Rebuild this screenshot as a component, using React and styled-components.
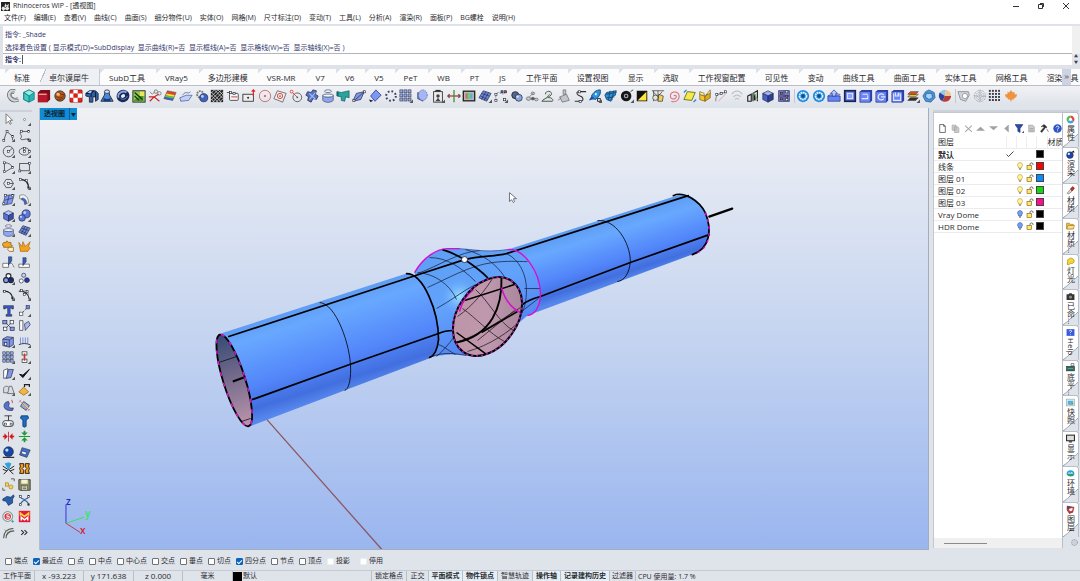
import React from "react";

import styled, { createGlobalStyle, css } from "styled-components";

const GlobalStyle = createGlobalStyle`
    * {
        box-sizing: border-box;
    }
    body {
        margin: 0;
        overflow: hidden;
        background: #dfe3ea;
        color: #2a2a2e;
        font-family: "Open Sans", "Noto Sans CJK SC", sans-serif;
        font-size: 8px;
        line-height: 12px;
    }
    button,
    input {
        font: inherit;
        color: inherit;
    }
    button {
        padding: 0;
        border: 0;
        background: none;
        white-space: nowrap;
    }
`;

/* ---------- icons, all on a 16 x 16 grid ---------- */

const K = "#20263a";
const B = "#3f5fd0";

const corner = <path d="M16 12v4h-4z" fill="#555" />;

const node = (x, y, color = "#fff") => (
    <rect x={x - 1} y={y - 1} width="2.4" height="2.4" fill={color} stroke={K} strokeWidth=".7" />
);

const ball = (fill, shine, x = 8, y = 8, r = 6) => (
    <g>
        <circle cx={x} cy={y} r={r} fill={fill} stroke={K} strokeWidth=".8" />
        <circle cx={x - r / 3} cy={y - r / 3} r={r / 3} fill={shine} />
    </g>
);

const cube = (a, b, c) => (
    <g stroke={K} strokeWidth=".7">
        <path d="M2 5l6-3 6 3-6 3z" fill={a} />
        <path d="M2 5l6 3v7l-6-3z" fill={b} />
        <path d="M14 5v7l-6 3V8z" fill={c} />
    </g>
);

const blueTile = (inner) => (
    <g>
        <path d="M1 3l2-2h12v12l-2 2H1z" fill="#2a3fa8" />
        <path d="M1 3h12v12H1z" fill="#6c86f4" stroke="#26388f" strokeWidth=".7" />
        {inner}
    </g>
);

const squares = (n, size, fill) => {
    const list = [];
    for (let i = 0; i < n * n; i++) {
        const step = 14 / n;
        list.push(
            <rect
                key={i}
                x={1 + (i % n) * step}
                y={1 + Math.floor(i / n) * step}
                width={size}
                height={size}
                fill={fill}
                stroke={n === 3 ? K : "none"}
                strokeWidth=".6"
            />
        );
    }
    return list;
};

const icons = {
    pipe: (
        <g fill="none">
            <path d="M10 3C5 1 2 6 5 10c2 3 6 3 9 2" stroke="#555" strokeWidth="5" />
            <path d="M10 3C5 1 2 6 5 10c2 3 6 3 9 2" stroke="#d2d5da" strokeWidth="3.600" />
            <path d="M9 3C5 3 4 7 6 9c2 3 5 3 8 3" stroke="#888" />
        </g>
    ),
    gem: (
        <g stroke="#0a5f66" strokeWidth=".7">
            <path d="M8 1l6 3v8l-6 3-6-3V4z" fill="#26b7b4" />
            <path d="M8 1l6 3-6 4-6-4z" fill="#8ff0e4" />
            <path d="M2 4l6 4v7l-6-3z" fill="#3fcdc6" />
        </g>
    ),
    redbox: (
        <g>
            <path d="M1 4l3-3h11v11l-3 3H1z" fill="#7c0d1b" />
            <path d="M1 5h11v10H1z" fill="#b8182c" />
            <path d="M2 6h9" stroke="#ffb5b5" strokeWidth="1.300" />
        </g>
    ),
    wood: (
        <g>
            {ball("#b4581c", "#f5b56b")}
            <path d="M3 8c3 3 7 3 10-1M4 12c3 1 6 0 8-2M6 3c2 3 5 4 7 3" stroke="#6d300c" fill="none" />
        </g>
    ),
    checker: (
        <g>
            <rect x="1" y="1" width="14" height="14" rx="1" fill="#e4281c" stroke="#650f0b" strokeWidth=".7" />
            <path d="M1 5h4V1h5v4h5v5h-5v5H5v-5H1z" fill="#fff" />
            <rect x="5" y="5" width="5" height="5" fill="#d2231a" />
        </g>
    ),
    football: (
        <g>
            <path d="M1 5l4-3h7l3 3v7l-3 2V9H9v6H5V9l-4-1z" fill="#2e63a9" stroke={K} />
            <path d="M1 5h6l3-3M7 5v4M12 3v6" stroke="#0f1b38" strokeWidth="1.300" fill="none" />
            <path d="M3 4l3-2 2 1-2 2z" fill="#9cd2ff" />
        </g>
    ),
    robe: (
        <g>
            <path d="M6 2h4l1 5 4 7H1l4-7z" fill="#4a89d8" stroke={K} />
            <ellipse cx="8" cy="3" rx="3" ry="2" fill="#cde1fa" stroke={K} strokeWidth=".8" />
            <path d="M4 10c3 2 6 2 8 0v4H4z" fill="#173a79" />
        </g>
    ),
    torus: (
        <g fill="none">
            <ellipse cx="8" cy="8" rx="5" ry="4.500" stroke="#142a5c" strokeWidth="5" transform="rotate(-30 8 8)" />
            <path d="M3 10C1 5 8 1 12 4" stroke="#8da4dd" strokeWidth="2" />
            <path d="M5 10c1 3 7 2 8-2" stroke="#7b86a8" />
        </g>
    ),
    terrain: (
        <g>
            <rect x="1" y="2" width="14" height="13" fill="#8fc94b" stroke={K} />
            <path d="M2 13L13 5v9H2z" fill="#4c9a2d" />
            <path d="M3 4l9 8M3 8l5 5" stroke="#17310f" strokeWidth="1.400" />
            <rect x="9" y="3" width="5" height="5" fill="#ece45a" />
        </g>
    ),
    scissors: (
        <g fill="none">
            <circle cx="9" cy="3" r="2" stroke="#777" />
            <circle cx="13" cy="5" r="2" stroke="#777" />
            <path d="M1 9h6l5-3M7 9l6 5M7 9l-5 5" stroke="#c22" strokeWidth="1.300" />
            <path d="M2 3l3 3 3-3" stroke="#777" />
        </g>
    ),
    rainbow: (
        <g>
            <path d="M5 2l10 2-4 9L1 11z" fill="#e0432e" />
            <path d="M4 5l10 2-1 2L3 7z" fill="#f5e13c" />
            <path d="M3 7l10 2-1 2L2 9z" fill="#3ecf52" />
            <path d="M2 9l10 2-1 2L1 11z" fill="#3b5bea" />
            <path d="M5 2l10 2-4 9L1 11z" fill="none" stroke="#555" strokeWidth=".6" />
        </g>
    ),
    surf: (
        <g stroke="#5566a0" strokeWidth=".9">
            <path d="M1 10l5-2c3-2 6 0 9-1l-4 6-9 1z" fill="#c2cff7" />
            <path d="M4 7c4-6 7 0 9-4" fill="none" />
        </g>
    ),
    gearball: (
        <g>
            <circle cx="6" cy="6" r="3.600" fill="none" stroke="#777" strokeWidth="2.200" strokeDasharray="2 1" />
            {ball("#4061c4", "#bcd0ff", 10, 10, 4.6)}
        </g>
    ),
    mesh: (
        <g>
            <rect x="1" y="1" width="14" height="14" fill="#222" />
            <path d="M1 3l12 12M1 7l8 8M1 11l4 4M5 1l10 10M9 1l6 6M1 5l4-4M1 9l8-8M1 13L13 1M3 15L15 3M7 15l8-8M11 15l4-4" stroke="#d3d3d3" strokeWidth=".9" />
        </g>
    ),
    rectcurve: (
        <g fill="none" stroke="#444">
            <rect x="4" y="5" width="10" height="8" rx="1" fill="#f5f5f5" />
            <path d="M1 4h5" stroke="#444" />
            <path d="M6 9h7" stroke="#b33" />
            {node(5, 4)}
            {node(9, 5)}
        </g>
    ),
    rectarrow: (
        <g fill="none">
            <rect x="1" y="6" width="12" height="8" fill="#eee" stroke="#333" />
            <circle cx="7" cy="10" r="1.200" fill="#333" />
            <path d="M13 8V1M11 3l2-2 2 2" stroke="#d22" strokeWidth="1.300" />
        </g>
    ),
    redcircle: (
        <g fill="none" stroke="#c66">
            <circle cx="8" cy="8" r="6.500" />
            <circle cx="8" cy="8" r=".8" fill="#e33" />
        </g>
    ),
    diamondcircle: (
        <g fill="none">
            <path d="M5 2l10 3-4 10-10-4z" stroke="#666" fill="#eee" />
            <circle cx="8" cy="8" r="3" stroke="#d33" />
            <circle cx="8" cy="8" r="1" fill="#d33" />
        </g>
    ),
    circledot: (
        <g fill="none">
            <circle cx="9.500" cy="9.500" r="5" stroke="#555" />
            <path d="M3 3l6 6" stroke="#d33" />
            <circle cx="3" cy="3" r="1.600" fill="#fff" stroke="#d33" />
            <circle cx="9.500" cy="9.500" r="1" fill="#555" />
        </g>
    ),
    clover: (
        <g fill="#5a72c4" stroke={K} strokeWidth=".8">
            <path d="M9 1l4 1-1 4 3 2-2 4-4-1-2 4-4-2 1-4-3-2 2-4 4 1z" />
            <path d="M5 5l7 7M12 4l-7 8" stroke="#a7bcff" strokeWidth="1.300" />
        </g>
    ),
    drum: (
        <g stroke="#4d5a80" strokeWidth=".9">
            <ellipse cx="8" cy="2.500" rx="4" ry="1.500" fill="#fff" />
            <path d="M2 7v6c3 3 9 3 12 0V7c-3 3-9 3-12 0z" fill="#8fa7ee" />
            <ellipse cx="8" cy="7.500" rx="6" ry="1.800" fill="#f4f6fd" />
        </g>
    ),
    tee: (
        <g>
            <path d="M1 3l5 1 9-2v8l-4-1-1 5-4-1V9L1 8z" fill="#2aa39e" stroke="#0c5555" strokeWidth=".7" />
            <path d="M2 3v5" stroke="#12686a" strokeWidth="2" />
        </g>
    ),
    sheet: (
        <g stroke={K} strokeWidth=".8">
            <path d="M5 5l9-2-4 9-9 2z" fill="#7f98ee" />
            <path d="M4 12L14 3" fill="none" />
            {node(14, 3)}
            {node(2, 13)}
        </g>
    ),
    bluediamond: (
        <g>
            <path d="M9 1l6 6-7 7-5-6z" fill="#7d97f4" stroke="#34488f" />
            <path d="M1 12l5 1-3 2z" fill={K} />
        </g>
    ),
    dotring: <circle cx="8" cy="8" r="5.500" fill="none" stroke="#33405f" strokeWidth="2.200" strokeDasharray="2 2.300" />,
    array: squares(3, 3.4, "#94a9e8"),
    bluecyl: (
        <g>
            <path d="M3 4v7l6 3V6z" fill="#6079d8" stroke={K} strokeWidth=".6" />
            <ellipse cx="9" cy="7" rx="5" ry="6" fill="#a4b6f4" stroke="#5d6fae" strokeDasharray="1.500 1" />
        </g>
    ),
    bottle: (
        <g>
            <rect x="3" y="3" width="10" height="12" fill="#ececec" stroke="#333" />
            <path d="M5 2h6" stroke="#333" strokeWidth="2" />
            <path d="M8 6a2 2 0 0 1 0 4l3 4H5l3-4a2 2 0 0 1 0-4" fill="#444" />
        </g>
    ),
    move: (
        <g strokeWidth="1.500">
            <path d="M1 8h14" stroke="#d22" />
            <path d="M8 1v14" stroke="#2b9a3b" />
            <path d="M3 6L1 8l2 2M13 6l2 2-2 2" stroke="#555" fill="none" />
        </g>
    ),
    picture: (
        <g>
            <rect x="1.500" y="2.500" width="13" height="11" fill="#b5b8be" stroke="#222" strokeWidth="1.500" />
            <path d="M4 5h4v6H4z" fill="#e8575e" />
            <path d="M6 5h4v6H6z" fill="#58d66b" />
            <path d="M10 5h2v6h-2z" fill="#6ba0f0" />
        </g>
    ),
    tilegrid: (
        <g stroke={K} strokeWidth=".7">
            <path d="M6 2l9 3-5 9-9-4z" fill="#6c86de" />
            <path d="M4 5l9 3M3 8l8 4M9 3L4 12M12 4l-5 9" fill="none" />
        </g>
    ),
    points: (
        <g fill="none">
            <path d="M2 13V6c5-6 6 4 12-3" stroke="#888" strokeDasharray="2 1" />
            {node(2, 13)}
            {node(2, 6)}
            {node(12, 12)}
            {node(13, 3, "#e33")}
            {node(9, 3, "#46e")}
        </g>
    ),
    pill: (
        <g>
            <ellipse cx="6" cy="7" rx="4" ry="4" fill="#56658e" stroke={K} />
            {ball("#8ba4dc", "#dbe6ff", 10, 10, 4)}
        </g>
    ),
    pebbles: (
        <g fill="#c4c9cf" stroke="#666" strokeWidth=".8">
            <ellipse cx="9" cy="5" rx="2" ry="1.500" />
            <ellipse cx="4" cy="11" rx="2.500" ry="2" />
            <ellipse cx="9" cy="11" rx="2" ry="1.500" fill="#555" />
            <ellipse cx="13" cy="12" rx="2" ry="1.500" />
            <path d="M5 9l4-4" />
        </g>
    ),
    snail: (
        <g fill="none" stroke="#444">
            <path d="M5 6c0-5 8-4 7 0-1 3-8 4-11 8h12c2-2-2-5-5-4" fill="#dfe3e4" />
            <path d="M4 12l6-6" stroke="#4d8c56" />
        </g>
    ),
    spray: (
        <g fill="#c2c6cc" stroke="#666" strokeWidth=".8">
            <path d="M7 1h3v5H7zM3 9l8-3 3 7-8 2z" />
            <path d="M1 13l4-3" />
        </g>
    ),
    spath: (
        <g fill="none" stroke="#333" strokeWidth="1.200">
            <path d="M15 3H7C3 3 4 7 8 8c4 1 5 6 0 6H2" />
            {node(7, 3)}
            {node(8, 14)}
        </g>
    ),
    rocket: (
        <g>
            <path d="M14 1c1 5-2 9-6 11L4 8c2-4 5-7 10-7z" fill="#2e93dd" stroke="#123e77" />
            <path d="M4 8l-3 5 4-1 3 0z" fill="#174b9b" />
            <circle cx="9" cy="6" r="1.300" fill="#c9f1ff" />
            <rect x="11" y="11" width="3" height="3" fill="#fff" stroke="#111" />
        </g>
    ),
    net: (
        <g>
            <path d="M3 4l11-2-1 5-4 2-1 5-5-2-2-5z" fill="#2f91cf" stroke="#10497c" />
            <path d="M2 6l12-2M3 10l9-1M7 2L5 13M11 2L9 13" stroke="#10497c" />
        </g>
    ),
    bomb: (
        <g>
            <circle cx="7" cy="8" r="6" fill="#15171b" />
            <circle cx="7" cy="8" r="2" fill="none" stroke="#aaa" strokeWidth="1.400" />
            <path d="M12 3l3-2" stroke="#333" />
        </g>
    ),
    contrast: (
        <g>
            <rect x="2" y="2" width="12" height="12" fill="#111" />
            <path d="M3 13L13 3v10z" fill="#ffe83b" />
        </g>
    ),
    bag: (
        <g>
            <path d="M1 2h14M2 3l11 10M13 3L3 13M3 2v12M8 2v12" stroke="#555" />
            <path d="M9 6l5 2-1 6H8z" fill="#f1ce54" stroke={K} strokeWidth=".7" />
            <circle cx="5" cy="10" r="3" fill="#e4e4d8" stroke="#555" />
        </g>
    ),
    spiral: (
        <path d="M8 8c1-2 4 0 2 2-2 3-7 1-6-3 1-5 9-5 10 1 0 5-5 8-9 6" fill="none" stroke="#df6b77" strokeWidth="1.200" />
    ),
    yellowtile: (
        <g>
            <path d="M5 3l9 1-4 9-9-1z" fill="#f5ea4b" stroke="#68671d" />
            <path d="M1 4l3-3M12 15l3-3" stroke="#2b86c9" strokeWidth="1.500" />
        </g>
    ),
    yellowbox: (
        <g stroke="#5f4d0b" strokeWidth=".7">
            <path d="M2 6l6 2v6l-6-2z" fill="#f8c52c" />
            <path d="M8 8l6-4v6l-6 4z" fill="#e3a71a" />
            <path d="M2 3l5 2 0 3-5-2zM14 1v4l-5 2z" fill="#fff4a6" />
        </g>
    ),
    curvepts: (
        <g fill="none" stroke="#777">
            <path d="M2 14c0-8 2-8 11-10" />
            <path d="M5 14L14 5" stroke="#d9a0a0" />
            {node(3, 6)}
            {node(8, 5)}
            {node(13, 3)}
        </g>
    ),
    waves: (
        <path d="M2 6c3-5 9-5 12 0M4 9c2-3 6-3 8 0M6 12c1-2 3-2 4 0" fill="none" stroke="#b8bdc4" strokeWidth="1.200" />
    ),
    penguin: (
        <g fill="none" stroke="#222" strokeWidth="1.300">
            <path d="M2 8l4-2v8H2zM8 14V5l5-3v12" />
            <path d="M10 6v7" stroke="#222" strokeWidth="2" />
            <path d="M9 4l4 8" stroke="#68c06e" />
        </g>
    ),
    bluecube: cube("#9db1f8", "#4661c9", "#2d3f99"),
    cubedots: (
        <g>
            <rect x="2" y="2" width="12" height="12" fill="#8090d6" stroke="#2b3776" />
            <path d="M8 2v12M2 8h12" stroke="#2b3776" />
            {node(5, 5, "#e44")}
            {node(5, 11, "#e44")}
            {node(11, 8, "#e44")}
            {node(11, 3)}
            {node(11, 12)}
        </g>
    ),
    ring: (
        <g>
            <circle cx="8" cy="8" r="7" fill="#1f8be0" />
            <circle cx="8" cy="8" r="4" fill="none" stroke="#e8f6ff" strokeWidth="2" strokeDasharray="2 .6" />
            <circle cx="8" cy="8" r="2" fill="#154a80" />
        </g>
    ),
    boxup: (
        <g>
            <path d="M1 8l3-2h11l-2 2z" fill="#b5c5ff" stroke="#26388f" strokeWidth=".6" />
            <path d="M1 8h14v6H1z" fill="#6883f3" stroke="#26388f" strokeWidth=".8" />
            <path d="M6 8V5H4l4-4 4 4h-2v3z" fill="#b5c5ff" stroke="#253a98" strokeWidth=".8" />
        </g>
    ),
    frame: (
        <g>
            <rect x="1" y="1" width="14" height="14" fill="#1a2452" />
            <rect x="3" y="3" width="10" height="10" fill="#6c86f4" />
            <rect x="5" y="5" width="6" height="6" fill="#8fa2f8" stroke="#e4eaff" />
        </g>
    ),
    tilerect: blueTile(<path d="M3 11h7V7M4 6h6" stroke="#e4eaff" fill="none" strokeWidth="1.200" />),
    tiletarget: blueTile(<path d="M10 7a3.500 3.500 0 1 0 0 4M7 9h5" stroke="#e4eaff" fill="none" strokeWidth="1.300" />),
    tilesave: blueTile(<path d="M3 5v8h8V5M5 4v4h4V4M8 5v2" stroke="#e4eaff" fill="none" strokeWidth="1.200" />),
    layers: (
        <g stroke={K} strokeWidth=".6">
            <path d="M2 13l3-3h9l-3 3z" fill="#333" />
            <path d="M2 9l3-3h9l-3 3z" fill="#f3c422" />
            <path d="M2 6l3-3h9l-3 3z" fill="#e2552c" />
        </g>
    ),
    poly: (
        <g stroke="#1d4f87" strokeWidth=".7">
            <path d="M8 1l6 3 1 6-5 5-6-1-3-6 3-5z" fill="#4c93d8" />
            <path d="M5 5l6 0 1 5-4 2-4-3z" fill="#a6d5fb" />
        </g>
    ),
    pie: (
        <g>
            <circle cx="8" cy="8" r="7" fill="#eef3f7" />
            <path d="M8 8L2 4a7 7 0 0 1 7-3z" fill="#8fc9ee" />
            <path d="M8 8L2 4a7 7 0 0 0 3 10z" fill="#31429b" />
            <path d="M8 8l1-7a7 7 0 0 1 6 7z" fill="#f3c48f" />
            <path d="M8 8h7a7 7 0 0 1-10 6z" fill="#b43f37" />
        </g>
    ),
    greytag: (
        <g>
            <path d="M1 3h12l1 4-4 7-6-2z" fill="#cfd2d6" stroke="#8b8f96" />
            <circle cx="9" cy="8" r="3" fill="#fff" stroke="#999" />
        </g>
    ),
    dotball: (
        <g fill="none" stroke="#8b8f98" strokeDasharray="1 1">
            <circle cx="8" cy="8" r="6.500" />
            <circle cx="8" cy="8" r="4.500" />
            <circle cx="8" cy="8" r="2.500" />
            <path d="M8 1v14M1 8h14" />
        </g>
    ),
    dotgrid: squares(4, 2.2, "#3a3e46"),
    leaf: (
        <path d="M8 1l2 3 2-1v3l3 0-1 3-3 2 1 1-3 0-1 3-1-3-3 0 1-1-3-2-1-3 3 0V3l2 1z" fill="#ee9440" />
    ),

    /* side palette */
    pointer: <path d="M5 1v12l3-3 2 4 1.500-1-2-4H13z" fill="#fff" stroke="#555" strokeWidth=".9" />,
    dot: <circle cx="8" cy="8" r="1.300" fill="#fff" stroke="#666" strokeWidth=".8" />,
    polyline: (
        <g fill="none" stroke="#444">
            <path d="M2 14L6 3l7 6v5" />
            {node(2, 14)}
            {node(6, 3)}
            {node(13, 9)}
        </g>
    ),
    freecurve: (
        <g fill="none" stroke="#444">
            <path d="M14 3H4c-4 4 3 4-1 9 2 3 6-1 10 1" />
            {node(4, 3)}
            {node(13, 3)}
            {node(13, 13)}
        </g>
    ),
    circle: (
        <g fill="none" stroke="#444">
            <circle cx="8" cy="8" r="6.500" />
            <path d="M8 8l5-4" />
            {node(8, 8)}
        </g>
    ),
    ellipse: (
        <g fill="none" stroke="#444">
            <ellipse cx="8" cy="8" rx="6.500" ry="4.500" />
            {node(8, 8)}
            {node(8, 4)}
            {node(14, 8)}
        </g>
    ),
    arc: (
        <g fill="none" stroke="#444">
            <path d="M3 2v12l10-6c-1-3-5-6-10-6" />
            {node(3, 2)}
            {node(3, 13)}
            {node(13, 8)}
        </g>
    ),
    rect: (
        <g fill="none" stroke="#444">
            <rect x="2" y="3" width="12" height="9" />
            {node(2, 12)}
            {node(14, 3)}
        </g>
    ),
    polygon: (
        <g fill="none" stroke="#444">
            <path d="M5 3h6l3 5-3 5H5L2 8z" />
            <path d="M8 8h6" />
            {node(8, 8)}
        </g>
    ),
    fillet: (
        <g fill="none" stroke="#222">
            <path d="M3 3c7 0 10 4 10 11" strokeWidth="1.800" />
            {node(3, 3)}
            {node(10, 4)}
            {node(13, 13)}
        </g>
    ),
    patch: (
        <g stroke={K} strokeWidth=".7">
            <path d="M4 3l11-1-3 11-11 2z" fill="#8098f0" />
            <path d="M3 9l11-3M9 2L6 14" fill="none" />
            {node(4, 3)}
            {node(13, 3)}
            {node(2, 13)}
        </g>
    ),
    bend: (
        <g stroke="#555" strokeWidth=".7">
            <path d="M2 3c7-3 11 3 11 9l-4 2c0-4-2-7-7-7z" fill="#f3f5fc" />
            <path d="M5 6c4 0 6 4 6 7l-3 1c0-3-1-5-4-6z" fill={B} />
        </g>
    ),
    box: cube("#b5c4ff", "#5872dc", "#394fae"),
    balls: (
        <g>
            {ball("#5c78dc", "#c6d2ff", 10, 6, 5)}
            {ball("#5c78dc", "#c6d2ff", 5, 11, 4)}
        </g>
    ),
    merge: (
        <g stroke="#7b4d08" strokeWidth=".8">
            <path d="M2 3h3l1-2 2 2h3v3l2 1-2 2H2V7L0 6z" fill="#f4a423" />
            <path d="M8 9h6v5H9l-2-2z" fill="#fff0c0" />
        </g>
    ),
    burst: <path d="M1 3l4 5 1-6 3 6 6-6-2 6 2 2-3 4H3z" fill="#f3a21c" stroke="#9b5b08" strokeWidth=".7" />,
    cutdown: (
        <g>
            <path d="M1 9h7v5H1zM9 9h3l3 5" fill="#fff" stroke="#444" strokeWidth=".8" />
            <path d="M8 1h4v5l-4 5z" fill="#345cc4" stroke={K} strokeWidth=".6" />
        </g>
    ),
    cutup: (
        <g>
            <path d="M1 10h13v4H1z" fill="#fff" stroke="#444" strokeWidth=".8" />
            <path d="M6 2h4v5l-4 5z" fill="#345cc4" stroke={K} strokeWidth=".6" />
        </g>
    ),
    rings: (
        <g fill="none" stroke={K} strokeWidth="1.400">
            <circle cx="8" cy="5" r="3" fill="#fff" />
            <circle cx="5" cy="10" r="3" fill="#8ba0ea" />
            <circle cx="11" cy="10" r="3" fill="#1c2a7d" />
        </g>
    ),
    threeballs: (
        <g stroke={K} strokeWidth=".8">
            <circle cx="7" cy="4" r="2.500" fill="#c5d2ff" />
            <circle cx="4" cy="11" r="2.500" fill="#fff" />
            <circle cx="11" cy="10" r="3" fill="#26379b" />
        </g>
    ),
    arcend: (
        <g fill="none" stroke="#222" strokeWidth="1.400">
            <path d="M1 4c7-1 12 3 12 10" />
            {node(3, 4)}
            {node(13, 12)}
        </g>
    ),
    arcpts: (
        <g fill="none" stroke="#222">
            <path d="M1 4c7-1 12 3 13 10" strokeWidth="1.400" />
            <path d="M4 3l8 1 1 6" stroke="#888" />
            {node(4, 3)}
            {node(11, 4)}
            {node(8, 8)}
        </g>
    ),
    letter: <path d="M2 2h12v4h-2V5h-2v8h2v2H5v-2h2V5H4v1H2z" fill="#3b59c9" stroke={K} strokeWidth=".7" />,
    scale: (
        <g>
            <path d="M4 12l8-8" stroke="#444" strokeDasharray="2 1" />
            <rect x="10" y="2" width="4" height="4" fill="#6e88e8" stroke={K} strokeWidth=".7" />
            <rect x="2" y="10" width="4" height="4" fill="#fff" stroke={K} strokeWidth=".7" />
        </g>
    ),
    squaresx: (
        <g stroke={K} strokeWidth=".8">
            <path d="M4 4l8 8M12 4l-8 8" />
            <rect x="1" y="2" width="5" height="4" fill="#8399e8" />
            <rect x="10" y="2" width="4" height="4" fill="#fff" />
            <rect x="2" y="10" width="4" height="4" fill="#fff" />
            <rect x="10" y="10" width="5" height="4" fill="#8399e8" />
        </g>
    ),
    shear: (
        <g stroke={K} strokeWidth=".8">
            <path d="M2 2h4v12H2z" fill="#fff" />
            <path d="M8 6l5-3 2 4-6 7z" fill="#a9b9f2" />
        </g>
    ),
    hexbox: (
        <g stroke={K} strokeWidth=".8">
            <path d="M1 5l5-3 8 1v9l-5 3-8-2z" fill="#7f96ea" />
            <path d="M1 5l8 1v9M9 6l5-3" fill="none" />
            <rect x="3" y="9" width="3" height="4" fill="#e6ecff" />
        </g>
    ),
    comb: (
        <g fill="none" strokeWidth="1.100">
            <path d="M3 3v8M6 3v8M9 3v8M12 3v8" stroke="#6f86d8" />
            <path d="M1 12c4-2 9-2 14 0" stroke="#334" />
        </g>
    ),
    column: (
        <g stroke="#222" strokeWidth=".8">
            <rect x="5" y="1" width="6" height="4" fill="#fff" />
            <rect x="5" y="10" width="6" height="4" fill="#fff" />
            <path d="M8 3v9" stroke="#c33" strokeWidth="2" />
        </g>
    ),
    plates: (
        <g stroke={K} strokeWidth=".8">
            <path d="M2 4l5-2v11l-5 1z" fill="#fff" />
            <path d="M8 3l6 0-3 10-6 1z" fill="#8197e4" />
        </g>
    ),
    check: <path d="M2 9l4 4 8-10-8 7z" fill="#111" stroke="#111" strokeWidth="1.200" />,
    cups: (
        <g fill="#d9dde3" stroke="#555" strokeWidth=".9">
            <path d="M2 12V7c0-4 7-4 7 0v5z" />
            <path d="M7 13l2-9h3l3 9z" />
        </g>
    ),
    cone: (
        <g strokeWidth=".8">
            <path d="M1 11l6-6 6 6-6 4z" fill="#f5b541" stroke="#8b5706" />
            <path d="M8 5V2h6v3" fill="none" stroke="#222" strokeWidth="1.500" />
        </g>
    ),
    hook: (
        <g>
            <path d="M8 3c-8 1-7 11 1 11h4l1-3C9 12 7 9 9 6z" fill="#5871d2" stroke={K} strokeWidth=".8" />
            <path d="M12 1l1 4" stroke="#c33" />
        </g>
    ),
    barrel: (
        <g>
            <path d="M7 3l7 5-4 6-7-5z" fill="#8fa6d8" stroke={K} strokeWidth=".8" />
            <path d="M6 6l6 5" stroke="#e4d36b" strokeWidth="2" />
            <path d="M1 4l3-3M12 15l3-3M2 2l12 12" stroke="#c66" strokeWidth=".8" />
        </g>
    ),
    cap: (
        <g fill="none" stroke="#222">
            <path d="M3 1h9M8 1v6" />
            <rect x="1" y="7" width="13" height="7" rx="3" fill="#fff" />
            {node(4, 11)}
            {node(11, 11)}
        </g>
    ),
    screw: <path d="M4 1h8l1 3-3 2v8l-2 1-2-1V6L3 4z" fill="#1c6fc2" stroke="#0b3770" />,
    squeezeh: <path d="M1 7h2V4l4 4-4 4V9H1zM15 7h-2V4L9 8l4 4V9h2zM7.500 2h1v12h-1z" fill="#d3161d" />,
    squeezev: <path d="M7 1v2H4l4 4 4-4H9V1zM7 15v-2H4l4-4 4 4H9v2zM1 7.500h14v1H1z" fill="#1d9a35" />,
    bluesphere: (
        <g>
            <path d="M1 14h14" stroke="#333" strokeWidth="1.500" />
            {ball("#1745a5", "#bfe0ff", 8, 7, 6)}
        </g>
    ),
    flag: (
        <g stroke={K} strokeWidth=".7">
            <path d="M5 2l10 3-4 9-9-3z" fill="#3f6ecf" />
            <path d="M5 6l6 2-2 3-5-2z" fill="#eef3ff" />
        </g>
    ),
    hairs: (
        <g fill="none" stroke="#222" strokeWidth="1.200">
            <path d="M1 5l6 4M1 9l5 2M2 15l6-6 6 6M15 5L9 9M15 9l-5 2" />
            <path d="M8 1l3 1-3 7-4-7z" fill="#2fa3dd" stroke="#2fa3dd" />
        </g>
    ),
    clamp: (
        <g stroke="#3a2206" strokeWidth="1.200" fill="#f2a024">
            <path d="M2 2h5v4L5 8l2 2v4H2l1-3-1-3 1-3zM14 2H9v4l2 2-2 2v4h5l-1-3 1-3-1-3z" />
        </g>
    ),
    select: (
        <g>
            <rect x="4" y="6" width="4" height="4" fill="#f8d34b" stroke="#806206" strokeWidth=".6" />
            <circle cx="11" cy="11" r="2.500" fill="#f8d34b" stroke="#806206" strokeWidth=".6" />
            <path d="M11 1h4v3M1 12v3h3" fill="none" stroke="#444" />
        </g>
    ),
    save: (
        <g>
            <path d="M1 2h14v13H2l-1-1z" fill="#8b8b68" stroke="#333" />
            <rect x="4" y="2" width="8" height="5" fill="#f4f2cf" />
            <rect x="4" y="9" width="8" height="6" fill="#d0cfb0" stroke="#333" strokeWidth=".6" />
            <path d="M6 11h4M6 13h4" stroke="#333" strokeWidth=".7" />
        </g>
    ),
    bluebird: <path d="M1 6l5-3 5 1 3-3 1 2-2 3v5l-5 3-3-5-4-1z" fill="#2760a8" stroke="#102c5e" strokeWidth=".8" />,
    xcurve: (
        <g fill="none" stroke="#2f5d9b" strokeWidth="1.500">
            <path d="M2 3c4 5 8 5 12 0M2 14c4-8 8-8 12 0" />
            {node(3, 3)}
            {node(13, 3)}
            {node(3, 13)}
            {node(13, 13)}
        </g>
    ),
    sticker: (
        <g>
            <circle cx="7" cy="8" r="6" fill="#fff" stroke="#7d9c9c" strokeWidth="1.400" />
            <circle cx="7" cy="8" r="4" fill="#d7333a" />
            <path d="M9 6H6v2h3v2H5" stroke="#fff" fill="none" />
            <path d="M12 13l2 2" stroke="#28a0a0" strokeWidth="2" />
        </g>
    ),
    em: (
        <g>
            <rect x="1" y="1" width="14" height="14" fill="#e4173d" />
            <path d="M3 7V4l5 4 5-4v3" fill="none" stroke="#ffd23d" strokeWidth="2" />
            <path d="M4 13V9l4 3 4-3v4" fill="none" stroke="#fff" strokeWidth="1.800" />
        </g>
    ),
    offset: (
        <g fill="none" stroke="#555">
            <path d="M2 15C2 8 6 3 14 3M5 15c0-5 3-9 10-9" strokeWidth="1.300" />
            <path d="M3 4l6 6" stroke="#6aa86e" />
        </g>
    ),
    more: <path d="M4 5l3 3-3 3M8 5l3 3-3 3" fill="none" stroke="#222" strokeWidth="1.300" />,

    /* layer panel and page tabs */
    newpage: <path d="M3 1h7l3 3v11H3zM10 1v3h3" fill="#fff" stroke="#333" strokeWidth="1.200" />,
    copy: <path d="M2 2h7v9H2zM6 5h6l2 2v8H6z" fill="#ccc" stroke="#999" />,
    cross: <path d="M2 3l12 11M14 3L2 14" stroke="#a5a5a5" strokeWidth="1.800" />,
    up: <path d="M0 12l8-7 8 7z" fill="#a2a2a2" />,
    down: <path d="M0 4l8 7 8-7z" fill="#a2a2a2" />,
    left: <path d="M12 1v14L4 8z" fill="#a2a2a2" />,
    funnel: (
        <g>
            <path d="M0 1h14L9 8v7l-4-2V8z" fill="#2d4cab" stroke="#1b2c66" />
            {corner}
        </g>
    ),
    page: <path d="M3 2h7l3 3v9H3zM5 8h6M5 11h6" fill="#ccc" stroke="#8f8f8f" />,
    hammer: <path d="M2 5l5-4 4 3 1 3-2-1-7 9-2-2 6-7-2-2zM12 9l3 5" fill="#333" stroke="#333" />,
    help: (
        <g>
            <circle cx="8" cy="8" r="7.500" fill="#2c55c5" />
            <path d="M5.500 6c0-3 5-3 5 0 0 2-2.500 2-2.500 4M8 11.500v1.500" stroke="#fff" fill="none" strokeWidth="1.600" />
        </g>
    ),
    bulb: (
        <g>
            <path d="M8 1a5 5 0 0 1 3 9v2H5v-2a5 5 0 0 1 3-9z" fill="#fff29a" stroke="#a98516" />
            <path d="M6 14h4" stroke="#555" strokeWidth="2" />
        </g>
    ),
    bulboff: (
        <g>
            <path d="M8 1a5 5 0 0 1 3 9v2H5v-2a5 5 0 0 1 3-9z" fill="#6ea0ee" stroke="#2b4a92" />
            <path d="M6 14h4" stroke="#555" strokeWidth="2" />
        </g>
    ),
    lock: (
        <g>
            <path d="M8 7V4c0-3 6-3 6 0v2" fill="none" stroke="#444" strokeWidth="1.500" />
            <rect x="2" y="7" width="9" height="8" fill="#ffe56b" stroke="#7a5c09" strokeWidth="1.200" />
        </g>
    ),
    tick: <path d="M1 9l4 4L15 3" fill="none" stroke="#333" strokeWidth="1.800" />,
    wheel: (
        <g fill="none" strokeWidth="4">
            <path d="M8 3a5 5 0 0 1 4.300 7.500" stroke="#e8443c" />
            <path d="M12.300 10.500a5 5 0 0 1-8.600 0" stroke="#3fa0e8" />
            <path d="M3.700 10.500A5 5 0 0 1 8 3" stroke="#56bf4b" />
        </g>
    ),
    render: (
        <g>
            {ball("#1847a8", "#eef6ff", 7, 9, 6)}
            <path d="M9 4l5-3 1 4z" fill="#222" />
        </g>
    ),
    brush: (
        <g>
            <path d="M2 13l6-7 3 3-6 5z" fill="#ddd" stroke="#555" />
            <path d="M8 5l4-4 3 3-4 5z" fill="#cf2a20" stroke="#6d120d" />
        </g>
    ),
    folder: (
        <g stroke="#966b12">
            <path d="M1 4h5l2 2h5v8H1z" fill="#f0b93c" />
            <path d="M4 8h11l-2 6H1z" fill="#ffe38c" />
        </g>
    ),
    lamp: <path d="M3 9c-2-6 7-10 11-4 2 5-3 8-6 6l-3 3-3-1z" fill="#f8d72e" stroke="#8b6c0a" />,
    camera: (
        <g>
            <path d="M1 4h4l1-2h4l1 2h4v10H1z" fill="#333" />
            <circle cx="8" cy="9" r="3" fill="#888" />
        </g>
    ),
    book: (
        <g>
            <rect x="1" y="2" width="14" height="12" fill="#3a5cdb" />
            <path d="M6 6c0-3 5-2 4 0l-2 2v1M8 11v1" stroke="#fff" fill="none" strokeWidth="1.500" />
        </g>
    ),
    ground: (
        <g>
            <path d="M9 1h5v4H9z" fill="#fff" stroke="#333" />
            <rect x="1" y="6" width="14" height="8" fill="#2b6b62" stroke="#222" />
            <path d="M3 10h10" stroke="#8fd7a8" />
        </g>
    ),
    photo: (
        <g>
            <rect x="1" y="2" width="14" height="12" fill="#e7f1f7" stroke="#8197a3" />
            <path d="M3 12V5h10v3z" fill="#56aee3" />
            <path d="M3 12l10-4v4z" fill="#4da86b" />
        </g>
    ),
    monitor: (
        <g>
            <rect x="1" y="2" width="14" height="10" fill="#ddd" stroke="#222" strokeWidth="1.800" />
            <path d="M5 14h6" stroke="#222" strokeWidth="2" />
        </g>
    ),
    sky: (
        <g>
            <path d="M1 9a7 7 0 0 1 14 0z" fill="#29a3dc" />
            <path d="M1 9h14c-1 6-12 6-14 0z" fill="#2a9f76" />
            <path d="M3 8c2-3 4-2 5-1 2-3 4 0 5 1z" fill="#fff" />
        </g>
    ),
    layerball: (
        <g>
            <path d="M2 2l12 2-2 9-6 2-4-6z" fill="#d9342b" stroke="#61120d" />
            <path d="M5 7l7-2-1 5-4 1z" fill="#fff" />
            <path d="M2 2l6 1-4 5z" fill="#2b4cab" />
        </g>
    ),
    gear: (
        <g fill="none" stroke="#a8afbd">
            <circle cx="8" cy="8" r="5" strokeWidth="2.500" strokeDasharray="2.500 1" />
            <circle cx="8" cy="8" r="2" />
        </g>
    )
};

const Svg = styled.svg`
    display: block;
    flex: none;
    width: ${(p) => p.$size}px;
    height: ${(p) => p.$size}px;
`;

const Icon = ({ name, size = 14, more = false }) => (
    <Svg $size={size} viewBox="0 0 16 16" aria-hidden="true">
        {icons[name]}
        {more && corner}
    </Svg>
);

/* ---------- window header ---------- */

const Window = styled.div`
    display: flex;
    flex-direction: column;
    height: 100vh;
`;

const TitleBar = styled.header`
    display: flex;
    align-items: center;
    gap: 3px;
    height: 12px;
    padding: 0 9px 0 1px;
    background: #fff;
`;

const Title = styled.h1`
    flex: 1;
    margin: 0;
    font-size: 7px;
    font-weight: 400;
`;

const WindowButton = styled.button`
    width: 22px;
    height: 12px;
    display: grid;
    place-items: center;
    &:last-child {
        width: 10px;
        margin-left: 6px;
    }
`;

const MenuBar = styled.nav`
    display: flex;
    gap: 8px;
    height: 12px;
    padding: 0 4px;
    background: #fff;
    font-size: 7px;
`;

const Command = styled.section`
    border: solid #dfe2e8;
    border-width: 2px 0 4px 3px;
    background: #fff;
    color: #33376b;
    font-size: 7px;
    display: grid;
    grid-template-columns: 1fr 8px;
`;

const History = styled.div`
    height: 28px;
    padding: 2px 2px 0;
    line-height: 13px;
    white-space: pre;
    border-bottom: 1px solid #b5b5b9;
`;

const Track = styled.div`
    background: #f0f0f1;
`;

const Prompt = styled.label`
    display: flex;
    align-items: center;
    height: 11px;
    padding-left: 2px;
    gap: 1px;
    font-weight: 600;
`;

const PromptInput = styled.input`
    flex: 1;
    height: 9px;
    padding: 0;
    border: 0;
    border-left: 1px solid #555;
    background: none;
    outline: none;
`;

const Steps = styled.div`
    display: grid;
    background: #e4e4e6;
    button {
        font-size: 4px;
        line-height: 5px;
    }
`;

const TabStrip = styled.div`
    display: flex;
    height: 17px;
    padding-left: 5px;
    overflow: hidden;
    background: #fcfcfd;
    border-bottom: 1px solid #b9bec8;
    position: relative;
`;

const Tab = styled.button`
    flex: none;
    height: 17px;
    padding: 0 ${(p) => (p.$latin ? 11 : 10)}px 0 9px;
    background: linear-gradient(135deg, #dde1e9 3px, transparent 3px);
    ${(p) =>
        p.$active &&
        css`
            background: linear-gradient(115deg, #fcfcfd 5px, #b9bec8 5px, #b9bec8 6px, #eef0f4 6px);
            border-right: 1px solid #c6cad2;
        `}
`;

const MoreTabs = styled.button`
    position: absolute;
    right: 9px;
    top: 0;
    width: 9px;
    height: 16px;
    background: #ced3e3;
    display: grid;
    place-items: center;
`;

const ToolStrip = styled.div`
    display: flex;
    align-items: center;
    height: 19px;
    padding-left: 5px;
    background: linear-gradient(#f1f2f5, #dfe3ea);
`;

const ToolGroup = styled.div`
    display: grid;
    grid-template-columns: repeat(${(p) => p.$count}, 1fr);
    flex: 0 1 ${(p) => p.$basis}px;
    & + & {
        margin-left: 2px;
        border-left: 1px solid #c3c7cf;
    }
`;

const Tool = styled.button`
    display: grid;
    place-items: center;
    min-width: 0;
`;

/* ---------- body ---------- */

const Body = styled.main`
    flex: 1;
    min-height: 0;
    display: flex;
    padding-top: 3px;
`;

const Palette = styled.aside`
    width: 40px;
    padding: 2px 7px 10px 0;
    border-right: 1px solid #b6bcc8;
    display: flex;
    flex-direction: column;
`;

const Grip = styled.div`
    height: 2px;
    background: #cdd1da;
`;

const PaletteGrid = styled.div`
    flex: 1;
    display: grid;
    grid-template-columns: 1fr 1fr;
    grid-auto-rows: 1fr;
`;

const Viewport = styled.section`
    flex: 1;
    min-width: 0;
    position: relative;
    background: linear-gradient(#f0f1f4, #c6d5f0 50%, #9ab6ef);
    border-right: 1px solid #a5adbb;
    border-bottom: 1px solid #a5adbb;
`;

const ViewName = styled.button`
    position: absolute;
    left: 0;
    top: 0;
    display: flex;
    align-items: center;
    height: 12px;
    padding-left: 4px;
    gap: 4px;
    background: #118bd2;
    color: #0d2233;
    font-size: 7px;
    font-weight: 600;
    span {
        height: 12px;
        width: 8px;
        border-left: 1px solid #0a5f95;
        font-size: 5px;
    }
`;

const Scene = styled.svg`
    display: block;
    width: 100%;
    height: 100%;
    text {
        font-size: 10px;
        font-weight: 600;
    }
`;

const Side = styled.aside`
    flex: 0 0 151px;
    display: flex;
    padding: 2px 1px 0 4px;
    flex-wrap: wrap;
    align-content: flex-start;
`;

const SideGrip = styled(Grip)`
    flex: 0 0 100%;
`;

const LayerPanel = styled.section`
    flex: 1;
    min-width: 0;
    height: calc(100% - 4px);
    display: flex;
    flex-direction: column;
    background: #fff;
    border: 1px solid #c3c7cf;
    border-width: 1px 0 0 1px;
`;

const LayerTools = styled.div`
    display: flex;
    justify-content: space-between;
    height: 23px;
    padding: 5px 0 0 4px;
    svg {
        margin-top: 3px;
    }
`;

const LayerTable = styled.table`
    border-collapse: collapse;
    table-layout: fixed;
    width: 100%;
    th,
    td {
        height: 12px;
        padding: 0;
        line-height: 11px;
        border-bottom: 1px solid #ececee;
        font-weight: 400;
        text-align: left;
        white-space: nowrap;
    }
    th {
        border-left: 1px solid #eeeef0;
    }
    th:first-child,
    td:first-child {
        padding-left: 4px;
        border-left: 0;
    }
`;

const LayerName = styled.td`
    && {
        font-weight: ${(p) => (p.$current ? 700 : 400)};
    }
`;

const Swatch = styled.button`
    display: block;
    width: 8px;
    height: 8px;
    border: 1px solid #444;
    background: ${(p) => p.$color};
`;

const Scroll = styled.div`
    margin-top: auto;
    height: 10px;
    padding: 5px 75px 0 10px;
    background: #f0f0f0;
    div {
        height: 1px;
        background: #8a8a8a;
    }
`;

const PageTabs = styled.nav`
    width: 17px;
    height: calc(100% - 4px);
    display: flex;
    flex-direction: column;
    border-left: 1px solid #b9bec8;
`;

const PageTab = styled.button`
    position: relative;
    flex: 1;
    min-height: 0;
    display: flex;
    align-items: center;
    gap: 1px;
    padding-top: 2px;
    writing-mode: vertical-rl;
    font-size: 8px;
    line-height: 14px;
    border: 1px solid #b9bec8;
    border-width: 1px 1px 0 0;
    border-radius: 0 3px 0 0;
    background: linear-gradient(to bottom right, #fff 48%, #8f95a1 50%, #dfe3ea 54%) 0 100% / 16px 14px no-repeat,
        linear-gradient(#fff, #fff) 0 0 / 16px calc(100% - 14px) no-repeat;
`;

const GearRow = styled.button`
    height: 11px;
    display: grid;
    place-items: center end;
`;

/* ---------- footer ---------- */

const SnapBar = styled.div`
    display: flex;
    align-items: center;
    height: 20px;
    padding: 2px 5px 0;
    gap: 5px;
    font-size: 7px;
`;

const Snap = styled.label`
    display: flex;
    align-items: center;
    gap: 2px;
    margin-right: ${(p) => (p.$loose ? 5 : 0)}px;
    input {
        appearance: none;
        width: 7px;
        height: 7px;
        margin: 0;
        border: 1px solid ${(p) => (p.$loose ? "#eceef2" : "#6d717a")};
        border-radius: 1px;
        background: #fff;
        display: grid;
        place-items: center;
    }
    input:checked {
        background: #0b63bd;
        border-color: #0b63bd;
    }
    input:checked::after {
        content: "";
        width: 2px;
        height: 4px;
        border: solid #fff;
        border-width: 0 1px 1px 0;
        transform: rotate(45deg);
    }
`;

const StatusBar = styled.footer`
    display: flex;
    height: 11px;
    border-top: 1px solid #c6cad2;
    font-size: 7px;
    line-height: 12px;
`;

const Cell = styled.button`
    display: flex;
    align-items: center;
    justify-content: ${(p) => (p.$start ? "flex-start" : "center")};
    gap: 1px;
    flex: 0 0 ${(p) => p.$w}px;
    border-right: 1px solid #b9bec8;
    font-size: ${(p) => (p.$num ? 8 : 7)}px;
    font-weight: ${(p) => (p.$on ? 600 : 400)};
    background: ${(p) => (p.$on ? "#e4eff6" : "none")};
`;

const Usage = styled.output`
    padding-left: 2px;
`;

const Ink = styled.i`
    width: 9px;
    height: 9px;
    background: #000;
`;

/* ---------- data ---------- */

const menus = [
    "文件(F)", "编辑(E)", "查看(V)", "曲线(C)", "曲面(S)", "细分物件(U)", "实体(O)", "网格(M)",
    "尺寸标注(D)", "变动(T)", "工具(L)", "分析(A)", "渲染(R)", "面板(P)", "BG螺栓", "说明(H)"
];

const tabs = [
    "标准", "卓尔谟犀牛", "SubD工具", "VRay5", "多边形建模", "VSR-MR", "V7", "V6", "V5", "PeT", "WB",
    "PT", "JS", "工作平面", "设置视图", "显示", "选取", "工作视窗配置", "可见性", "变动", "曲线工具",
    "曲面工具", "实体工具", "网格工具", "渲染工具"
];

const toolGroups = [
    {
        basis: 787,
        names:
            "pipe gem redbox wood checker football robe torus terrain scissors rainbow surf gearball mesh rectcurve rectarrow redcircle diamondcircle circledot clover drum tee sheet bluediamond dotring array bluecyl bottle move picture tilegrid points pill pebbles snail spray spath rocket net bomb contrast bag spiral yellowtile yellowbox curvepts waves penguin bluecube cubedots"
    },
    { basis: 159, names: "ring ring boxup frame tilerect tiletarget tilesave layers poly pie" },
    { basis: 64, names: "greytag dotball dotgrid leaf" }
];

const flyouts = ["array", "bottle", "tilegrid", "points", "rocket", "layers", "bomb"];

const palette =
    "pointer dot polyline freecurve circle ellipse arc rect polygon fillet patch bend box balls drum tilegrid merge burst cutdown cutup rings threeballs arcend arcpts letter scale squaresx shear hexbox comb array column plates check cups cone hook barrel cap screw squeezeh squeezev bluesphere flag hairs clamp select save bluebird xcurve sticker em offset more";

const noFlyout = ["pointer", "merge", "burst", "cutdown", "cutup", "threeballs", "letter", "squaresx", "shear"];

const layers = [
    { name: "默认", color: "#000", current: true },
    { name: "线条", color: "#ff0000", icon: "bulb" },
    { name: "图层 01", color: "#0a8cff", icon: "bulb" },
    { name: "图层 02", color: "#12d812", icon: "bulb" },
    { name: "图层 03", color: "#ff0a90", icon: "bulb" },
    { name: "Vray Dome", color: "#000", icon: "bulboff" },
    { name: "HDR Dome", color: "#000", icon: "bulboff" }
];

const layerTools = ["newpage", "copy", "cross", "up", "down", "left", "funnel", "page", "hammer", "help"];

const pages = [
    ["wheel", "属性"],
    ["render", "渲染"],
    ["brush", "材质"],
    ["folder", "材质…"],
    ["lamp", "灯光"],
    ["camera", "已命…"],
    ["book", "Help"],
    ["ground", "底平…"],
    ["photo", "快照"],
    ["monitor", "显示"],
    ["sky", "环境"],
    ["layerball", "图层"]
];

const snaps = ["端点", "最近点", "点", "中点", "中心点", "交点", "垂点", "切点", "四分点", "节点", "顶点", "投影", "停用"];

const modes = [
    ["锁定格点", 35],
    ["正交", 22],
    ["平面模式", 34, true],
    ["物件锁点", 35, true],
    ["智慧轨迹", 35],
    ["操作轴", 28, true],
    ["记录建构历史", 49, true],
    ["过滤器", 26]
];

const hub =
    "M415 273C424 257 438 249 448 249C470 248 482 254 508 250C524 250 540 274 541 293C541 308 535 315 528 316L500 340L481 357C466 357 456 352 430 358z";

const Model = () => (
    <Scene viewBox="40 108 889 442" preserveAspectRatio="xMidYMid slice" role="img" aria-label="透视图">
        <defs>
            <linearGradient id="left" gradientUnits="userSpaceOnUse" x1="312" y1="300" x2="342" y2="394">
                <stop offset="0" stopColor="#5c9af0" />
                <stop offset=".2" stopColor="#68a8ff" />
                <stop offset=".65" stopColor="#5286fa" />
                <stop offset=".88" stopColor="#426fdf" />
                <stop offset="1" stopColor="#5587ec" />
            </linearGradient>
            <linearGradient id="right" gradientUnits="userSpaceOnUse" x1="600" y1="220" x2="620" y2="283">
                <stop offset="0" stopColor="#5c9af0" />
                <stop offset=".25" stopColor="#68a8ff" />
                <stop offset=".65" stopColor="#5286fa" />
                <stop offset=".88" stopColor="#426fdf" />
                <stop offset="1" stopColor="#5587ec" />
            </linearGradient>
            <linearGradient id="hub" gradientUnits="userSpaceOnUse" x1="450" y1="250" x2="500" y2="350">
                <stop offset="0" stopColor="#5fa0f6" />
                <stop offset=".45" stopColor="#62a2fb" />
                <stop offset="1" stopColor="#4c7df0" />
            </linearGradient>
            <radialGradient id="glow" gradientUnits="userSpaceOnUse" cx="460" cy="297" r="20">
                <stop offset="0" stopColor="#9ce4ff" />
                <stop offset="1" stopColor="#62a2fb" stopOpacity="0" />
            </radialGradient>
            <linearGradient id="inside" x1="0" y1="0" x2="0" y2="1">
                <stop offset="0" stopColor="#344a74" />
                <stop offset=".45" stopColor="#736a8c" />
                <stop offset="1" stopColor="#bd95ac" />
            </linearGradient>
            <linearGradient id="mouth" x1="0" y1="0" x2="1" y2="1">
                <stop offset="0" stopColor="#bd94a6" />
                <stop offset=".5" stopColor="#bf98ad" />
                <stop offset="1" stopColor="#9f8096" />
            </linearGradient>
        </defs>

        <path d="M267 420L382 550" stroke="#8d5562" strokeWidth="1.300" />

        <path d="M508 250L682 194.500C698 194 710 214 710 231C709 245 703 253 693 255L528 316L500 300z" fill="url(#right)" />
        <path d={hub} fill="url(#hub)" />
        <path d={hub} fill="url(#glow)" />
        <path d="M221 334L407 274C425 274 440 312 439 341C438 350 436 356 432 358L250 427z" fill="url(#left)" />

        <g fill="none" stroke="#1c2a48" strokeWidth=".8">
            <path d="M320 303C336 304 351 345 351 370C351 381 349 390 345 391" stroke="#000" />
            <path d="M598 221C616 219 631 243 631 262C630 274 625 281 618 282" stroke="#000" />
            <path d="M448 249C470 248 482 254 508 250" stroke="#38549a" />
            <path d="M430 258C446 258 460 266 476 282M466 250C484 255 496 264 505 277M418 274C440 266 460 252 480 251" />
            <path d="M428 288C448 279 470 266 493 263C508 261 518 262 528 262M437 309C450 302 464 291 476 285" />
            <path d="M507 254C520 260 527 275 527 290C527 302 525 310 520 318M525 289H541" />
            <path d="M418 273C434 274 450 284 457 300M437 357C443 352 449 345 454 338M439 345C445 347 450 352 456 355M522 312L539 299" />
            <path d="M430 358C446 351 458 355 467 356" />
        </g>

        <ellipse cx="234.500" cy="381" rx="11" ry="48" transform="rotate(-17.500 234.500 381)" fill="url(#inside)" />
        <g fill="none" stroke="#000">
            <path d="M219 363L237 357M242 422L251 419" strokeWidth=".7" />
            <path d="M233 382L244 378" strokeWidth="2" />
            <ellipse cx="234.500" cy="381" rx="11" ry="48" transform="rotate(-17.500 234.500 381)" strokeWidth="1.800" />
            <ellipse
                cx="234.500"
                cy="381"
                rx="11"
                ry="48"
                transform="rotate(-17.500 234.500 381)"
                stroke="#d117c6"
                strokeWidth="1.600"
                strokeDasharray="4 7"
            />
        </g>

        <g fill="none" stroke="#000" strokeWidth="1.700" strokeLinecap="round">
            <path d="M229 337L413 277L465 260C480 256 495 257 507 254L689 196" />
            <path d="M253 400L350 365L439 334C445 331 449 331 454 331M523 305C528 301 534 299 541 297L631 263L710 235" />
            <path d="M407 274C424 274 439 312 439 340C438 350 435 356 430 358" />
            <path d="M443 250C450 252 458 256 465 260C474 266 482 272 488 278" />
            <path d="M674 196C684 191 700 201 706 213C713 230 711 249 693 255" />
            <path d="M710 217L733 209" strokeWidth="2.200" />
        </g>
        <g fill="none" stroke="#d80fd0" strokeWidth="1.400">
            <path d="M415 273C424 257 438 249 448 249L460 249" />
            <path d="M508 250C524 248 540 272 541 293C541 308 535 315 528 316" />
            <path d="M706 213C713 230 711 249 696 254" strokeDasharray="3 4" />
        </g>

        <ellipse cx="488" cy="317" rx="43" ry="30" transform="rotate(-56 488 317)" fill="url(#mouth)" />
        <g fill="none" stroke="#2b1c28" strokeWidth=".8">
            <path d="M458 317C474 306 486 290 493 279M456 343C480 336 505 318 521 308M468 352C490 346 510 332 520 322" />
            <path d="M463 309C476 318 490 334 505 342M476 290C488 300 500 324 514 331" />
            <path d="M478 341L515 311" />
            <path d="M502 278C503 307 492 336 457 343" stroke="#000" strokeWidth="1.900" />
            <path d="M465 301L515 285M457 333L487 355M482 333L518 312" stroke="#000" strokeWidth="1.500" />
            <path d="M502 288C506 303 513 309 521 313M460 312C463 301 467 295 474 290" stroke="#d80fd0" strokeWidth="1.500" />
        </g>
        <g fill="none" transform="rotate(-56 488 317)">
            <ellipse cx="488" cy="317" rx="43" ry="30" stroke="#000" strokeWidth="2" />
            <ellipse cx="488" cy="317" rx="43" ry="30" stroke="#c818b8" strokeWidth="1.400" strokeDasharray="2 3" />
        </g>
        <circle cx="465" cy="260" r="3" fill="#fff" stroke="#222" strokeWidth=".8" />

        <path d="M510 193v9l2-2 2 3 1-1-1-3h3z" fill="#fff" stroke="#556" strokeWidth=".8" />

        <g fill="none">
            <path d="M66 524V505" stroke="#3538d0" />
            <path d="M66 524L84 518" stroke="#3be05a" />
            <path d="M66 524L80 533" stroke="#c8354a" />
        </g>
        <text x="66" y="506" fill="#2424c8">z</text>
        <text x="85" y="518" fill="#30e850">y</text>
        <text x="80" y="535" fill="#d42436">x</text>
    </Scene>
);

export default class App extends React.Component {
    constructor(props) {
        super(props);
        this.state = {
            tab: "卓尔谟犀牛",
            snaps: ["最近点", "四分点"]
        };
    }

    toggleSnap = (name) => {
        const on = this.state.snaps;
        this.setState({
            snaps: on.includes(name) ? on.filter((s) => s !== name) : [...on, name]
        });
    };

    render() {
        return (
            <Window>
                <GlobalStyle />
                <TitleBar>
                    <Svg $size={9} viewBox="0 0 16 16" aria-hidden="true">
                        <rect width="16" height="16" fill="#222" />
                        <path d="M1 12c1-5 3-3 5-4l2-6 2 4 4-3-1 6 2 3-4 3-3-2-4 3z" fill="#e8e8e8" />
                        <path d="M5 8l3 2 3-3" stroke="#222" fill="none" strokeWidth="1.500" />
                    </Svg>
                    <Title>Rhinoceros WIP - [透视图]</Title>
                    <WindowButton aria-label="最小化">
                        <Svg $size={8} viewBox="0 0 8 8">
                            <path d="M1 4.500h6" stroke="#333" />
                        </Svg>
                    </WindowButton>
                    <WindowButton aria-label="还原">
                        <Svg $size={8} viewBox="0 0 8 8">
                            <path d="M1.500 2.500h4v4h-4zM3 1.500h3.500V5" fill="none" stroke="#333" />
                        </Svg>
                    </WindowButton>
                    <WindowButton aria-label="关闭">
                        <Svg $size={8} viewBox="0 0 8 8">
                            <path d="M1 1l6 6M7 1L1 7" stroke="#333" />
                        </Svg>
                    </WindowButton>
                </TitleBar>
                <MenuBar>
                    {menus.map((m) => (
                        <button key={m}>{m}</button>
                    ))}
                </MenuBar>
                <Command>
                    <History>
                        {"指令: _Shade\n选择着色设置 ( 显示模式(D)=SubDdisplay  显示曲线(R)=否  显示框线(A)=否  显示格线(W)=否  显示轴线(X)=否 )"}
                    </History>
                    <Track />
                    <Prompt>
                        指令:
                        <PromptInput type="text" />
                    </Prompt>
                    <Steps>
                        <button aria-label="上一个">▲</button>
                        <button aria-label="下一个">▼</button>
                    </Steps>
                </Command>
                <TabStrip role="tablist">
                    {tabs.map((t) => (
                        <Tab
                            key={t}
                            role="tab"
                            aria-selected={t === this.state.tab}
                            $active={t === this.state.tab}
                            $latin={/^[A-Z]/.test(t)}
                            onClick={() => this.setState({ tab: t })}
                        >
                            {t}
                        </Tab>
                    ))}
                    <MoreTabs aria-label="更多">
                        <Icon name="more" size={8} />
                    </MoreTabs>
                </TabStrip>
                <ToolStrip>
                    {toolGroups.map(({ basis, names }) => {
                        const list = names.split(" ");
                        return (
                            <ToolGroup key={basis} $count={list.length} $basis={basis}>
                                {list.map((name, i) => (
                                    <Tool key={i} aria-label={name}>
                                        <Icon name={name} more={flyouts.includes(name)} />
                                    </Tool>
                                ))}
                            </ToolGroup>
                        );
                    })}
                </ToolStrip>
                <Body>
                    <Palette>
                        <Grip />
                        <PaletteGrid>
                            {palette.split(" ").map((name, i) => (
                                <Tool key={i} aria-label={name}>
                                    <Icon name={name} size={13} more={i < 36 && !noFlyout.includes(name)} />
                                </Tool>
                            ))}
                        </PaletteGrid>
                    </Palette>
                    <Viewport>
                        <Model />
                        <ViewName>
                            透视图<span>▼</span>
                        </ViewName>
                    </Viewport>
                    <Side>
                        <SideGrip />
                        <LayerPanel>
                            <LayerTools>
                                {layerTools.map((name) => (
                                    <button key={name} aria-label={name}>
                                        <Icon name={name} size={9} />
                                    </button>
                                ))}
                            </LayerTools>
                            <LayerTable>
                                <colgroup>
                                    <col />
                                    <col width="10" />
                                    <col width="10" />
                                    <col width="10" />
                                    <col width="11" />
                                    <col width="15" />
                                </colgroup>
                                <thead>
                                    <tr>
                                        <th>图层</th>
                                        <th />
                                        <th />
                                        <th />
                                        <th />
                                        <th>材质</th>
                                    </tr>
                                </thead>
                                <tbody>
                                    {layers.map((l) => (
                                        <tr key={l.name}>
                                            <LayerName $current={l.current}>{l.name}</LayerName>
                                            <td>{l.current && <Icon name="tick" size={8} />}</td>
                                            <td>{l.icon && <Icon name={l.icon} size={8} />}</td>
                                            <td>{l.icon && <Icon name="lock" size={8} />}</td>
                                            <td>
                                                <Swatch $color={l.color} aria-label={l.name} />
                                            </td>
                                            <td />
                                        </tr>
                                    ))}
                                </tbody>
                            </LayerTable>
                            <Scroll>
                                <div />
                            </Scroll>
                        </LayerPanel>
                        <PageTabs>
                            {pages.map(([icon, label], i) => (
                                <PageTab key={i}>
                                    <Icon name={icon} size={9} />
                                    {label}
                                </PageTab>
                            ))}
                            <GearRow aria-label="选项">
                                <Icon name="gear" size={9} />
                            </GearRow>
                        </PageTabs>
                    </Side>
                </Body>
                <SnapBar>
                    {snaps.map((s, i) => (
                        <Snap key={s} $loose={i > 10}>
                            <input
                                type="checkbox"
                                checked={this.state.snaps.includes(s)}
                                onChange={() => this.toggleSnap(s)}
                            />
                            {s}
                        </Snap>
                    ))}
                </SnapBar>
                <StatusBar>
                    <Cell $w={35}>工作平面</Cell>
                    <Cell $w={49} $num>x -93.223</Cell>
                    <Cell $w={50} $num>y 171.638</Cell>
                    <Cell $w={49} $num>z 0.000</Cell>
                    <Cell $w={50}>毫米</Cell>
                    <Cell $w={139} $start>
                        <Ink />
                        默认
                    </Cell>
                    {modes.map(([name, w, on]) => (
                        <Cell key={name} $w={w} $on={on}>
                            {name}
                        </Cell>
                    ))}
                    <Usage>CPU 使用量: 1.7 %</Usage>
                </StatusBar>
            </Window>
        );
    }
}
